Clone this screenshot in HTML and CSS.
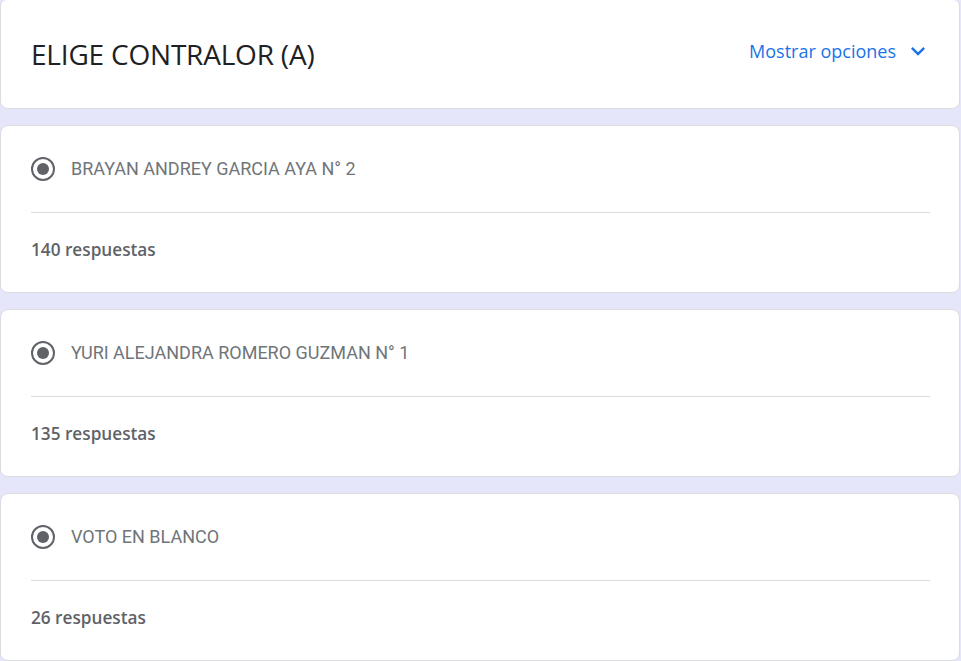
FILE: index.html
```html
<!DOCTYPE html>
<html lang="es">
<head>
    <meta charset="UTF-8">
    <meta name="viewport" content="width=device-width, initial-scale=1.0">
    <title>Resumen de respuestas</title>
    <link rel="stylesheet" href="styles.css">
</head>
<body>
    <div class="page">
        <div class="card header-card">
            <h1 class="question-title">ELIGE CONTRALOR (A)</h1>
            <button class="options-toggle" type="button">
                <span>Mostrar opciones</span>
                <svg class="chevron" viewBox="0 0 24 24" width="28" height="28" aria-hidden="true">
                    <path d="M16.59 8.59L12 13.17 7.41 8.59 6 10l6 6 6-6z"></path>
                </svg>
            </button>
        </div>

        <div class="card answer-card">
            <div class="answer-row">
                <span class="radio"><span class="radio-dot"></span></span>
                <span class="answer-label">BRAYAN ANDREY GARCIA AYA N° 2</span>
            </div>
            <div class="answer-count">140 respuestas</div>
        </div>

        <div class="card answer-card">
            <div class="answer-row">
                <span class="radio"><span class="radio-dot"></span></span>
                <span class="answer-label">YURI ALEJANDRA ROMERO GUZMAN N° 1</span>
            </div>
            <div class="answer-count">135 respuestas</div>
        </div>

        <div class="card answer-card">
            <div class="answer-row">
                <span class="radio"><span class="radio-dot"></span></span>
                <span class="answer-label">VOTO EN BLANCO</span>
            </div>
            <div class="answer-count">26 respuestas</div>
        </div>
    </div>
</body>
</html>
```

FILE: styles.css
```css
body {
    margin: 0;
    padding: 0;
    background-color: #e6e6fa;
    font-family: "Open Sans", Arial, sans-serif;
}

.page {
    display: flex;
    flex-direction: column;
    gap: 16px;
    width: 960px;
}

.card {
    background: #fff;
    border: 1px solid #dadce0;
    border-radius: 8px;
}

.header-card {
    display: flex;
    align-items: center;
    justify-content: space-between;
    height: 108px;
    padding: 0 30px;
    border-top: none;
    border-top-left-radius: 6px;
    border-top-right-radius: 6px;
}

.question-title {
    margin: 0;
    font-family: "Open Sans", Arial, sans-serif;
    font-size: 28px;
    font-weight: 400;
    color: #202124;
    letter-spacing: -0.2px;
}

.options-toggle {
    display: flex;
    align-items: center;
    gap: 8px;
    margin-top: -6px;
    padding: 0;
    background: none;
    border: none;
    font-family: "Open Sans", Arial, sans-serif;
    font-size: 18px;
    font-weight: 500;
    color: #1a73e8;
    cursor: pointer;
}

.chevron {
    fill: #1a73e8;
    margin-right: -3px;
}

.answer-row {
    display: flex;
    align-items: center;
    gap: 16px;
    padding: 31px 0;
    margin: 0 29px 0 30px;
    border-bottom: 1px solid #dadce0;
}

.radio {
    display: flex;
    align-items: center;
    justify-content: center;
    box-sizing: border-box;
    width: 24px;
    height: 24px;
    border: 2px solid #5f6368;
    border-radius: 50%;
}

.radio-dot {
    width: 12px;
    height: 12px;
    border-radius: 50%;
    background: #5f6368;
}

.answer-label {
    font-family: Roboto, Arial, sans-serif;
    font-size: 18px;
    color: #70757a;
    line-height: 24px;
}

.answer-count {
    padding: 27px 30px 32px;
    font-family: "Open Sans", Arial, sans-serif;
    font-size: 17.2px;
    font-weight: 600;
    line-height: 20px;
    color: #5f6368;
}
```
